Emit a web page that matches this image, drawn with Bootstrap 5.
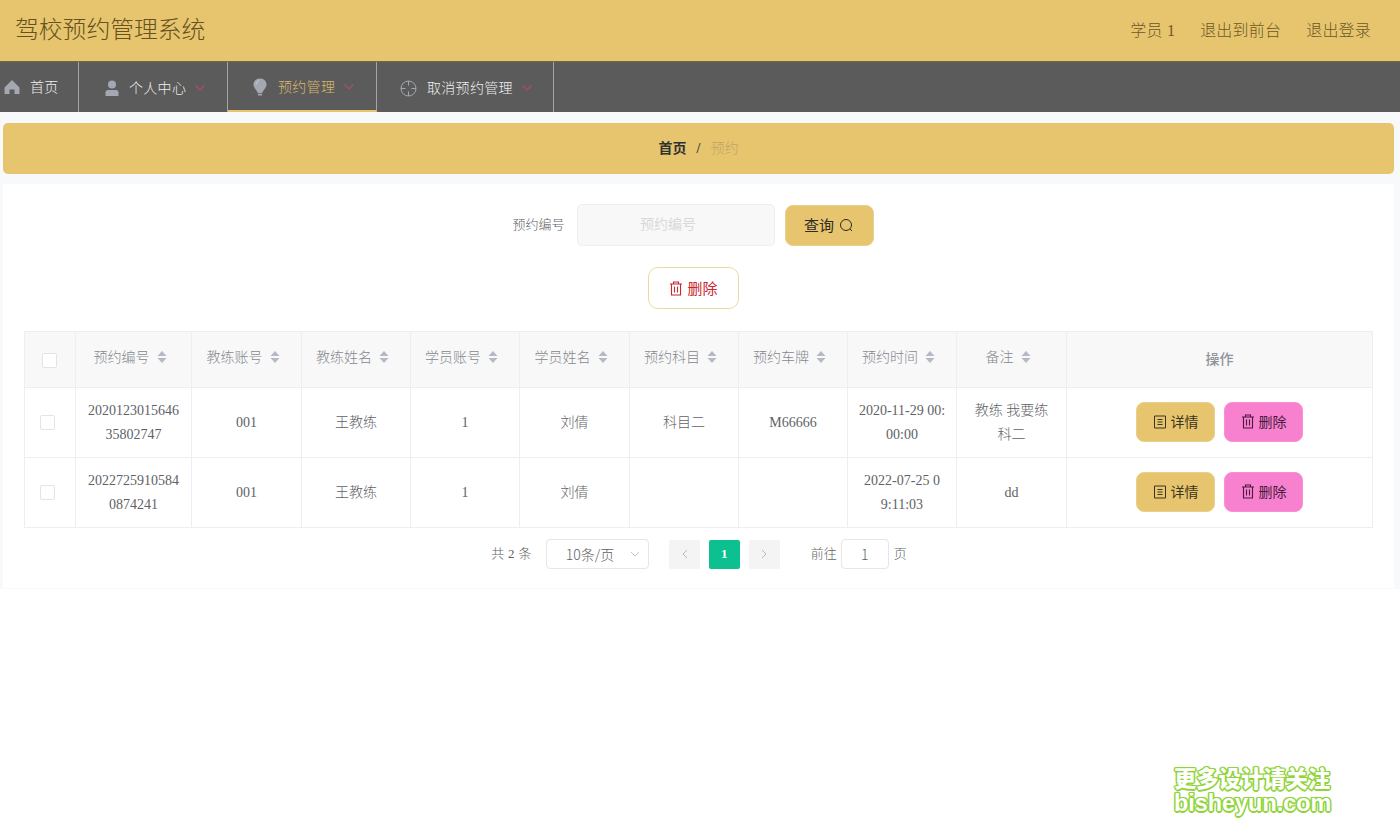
<!DOCTYPE html>
<html lang="zh">
<head>
<meta charset="utf-8">
<title>驾校预约管理系统</title>
<link href="https://cdn.jsdelivr.net/npm/bootstrap@5.3.0/dist/css/bootstrap.min.css" rel="stylesheet">
<style>
:root{--gold:#e6c56e;}
html,body{height:100%;}
body{background:#fff;font-family:"Liberation Serif","Noto Sans CJK SC",serif;font-weight:300;color:#606266;position:relative;overflow:hidden;}
.top-bar{height:61px;background:var(--gold);color:#6d5727;padding:0 29px 0 15px;}
.top-title{font-size:23.8px;line-height:1;color:#67511f;}
.top-link{font-size:16px;color:#6d5727;letter-spacing:.2px;}
.top-links{gap:25px;}
.menu-bar{height:51px;background:#5b5b5b;border-top:1px solid #77683f;}
.menu-item{height:50px;border-right:1px solid #a5a5a5;color:#eee;font-size:14px;letter-spacing:.3px;}
.menu-item svg{flex:none;}
.mi-home{width:79px;padding-left:3px;}
.mi-home .lab{margin-left:9px;}
.mi-user{width:149px;padding:2px 0 0 24px;}
.mi-bulb{width:149px;padding:2px 0 0 25px;color:#dcb96a;border-bottom:2px solid var(--gold);}
.mi-cancel{width:177px;padding:2px 0 0 23px;}
.mi-user .lab{margin-left:8px;}
.mi-bulb .lab{margin-left:11px;}
.mi-cancel .lab{margin-left:10px;}
.chev{margin-left:8px;}
.main-zone{background:#f8f9fa;height:477px;padding:11px 6px 0 3px;}
.crumb-bar{height:51px;background:var(--gold);border-radius:5px;font-size:14px;}
.crumb-bar b{color:#303133;font-weight:700;}
.crumb-bar .sep{color:#444;margin:0 10px;font-weight:700;}
.crumb-bar .now{color:#bda668;}
.panel{background:#fff;height:404px;margin-top:10px;padding:20px 21px 0;}
.search-row{gap:12px;height:42px;padding-right:11px;}
.search-lab{font-size:13px;color:#606266;width:52px;white-space:nowrap;}
.search-box{width:198px;height:42px;background:#f8f8f8;border:1px solid #eceef2;border-radius:5px;text-align:center;font-size:14px;color:#5f6266;font-family:inherit;padding:0 15px 0 0;}
.search-box::placeholder{color:#d8d8da;opacity:1;}
.btn-query{width:89px;height:41px;margin-left:-2px;background:var(--gold);border:1px solid #e8cf92;border-radius:8px;color:#2c2a22;font-size:15px;font-family:"Noto Sans CJK SC",sans-serif;font-weight:400;padding:0;gap:5px;}
.btn-query:hover,.btn-gold:hover{background:var(--gold);}
.del-row{margin-top:21px;height:42px;margin-left:-10px;}
.btn-outline-del{width:91px;height:42px;background:#fff;border:1px solid #e6dc9f;border-radius:10px;color:#c9252d;font-size:15px;font-family:"Noto Sans CJK SC",sans-serif;font-weight:400;padding:0;gap:4px;}
.data-wrap{margin-top:22px;width:1348px;}
.data-grid{table-layout:fixed;width:1348px;border-collapse:collapse;font-size:14px;color:#606266;}
.data-grid th,.data-grid td{border:1px solid #ebeef5;text-align:center;vertical-align:middle;padding:0 8px;line-height:24px;box-shadow:none;font-weight:300;}
.data-grid th{background:#f8f8f9;height:56px;color:#85888d;}
.data-grid th.srt{padding-bottom:4px;}
.data-grid td{height:70px;background:#fff;}
.data-grid td.shift{padding-bottom:2px;}
.c0{width:51px}.c1{width:116px}.c2{width:110px}.c3{width:109px}.c4{width:109px}.c5{width:110px}.c6{width:109px}.c7{width:109px}.c8{width:109px}.c9{width:110px}.c10{width:306px}
.data-grid th.op{font-weight:500;color:#909399;}
.sort-ic{display:inline-block;vertical-align:-2px;margin:0 7px 0 7px;}
.tick{display:inline-block;width:15px;height:15px;border:1px solid #e2e4e9;border-radius:2px;background:#fff;vertical-align:middle;margin-right:6px;}
.tick-lg{margin-right:2px;}
.rowbtn{width:79px;height:40px;border-radius:8px;font-size:14px;font-family:"Noto Sans CJK SC",sans-serif;font-weight:400;padding:0;color:#3c3520;border:1px solid #e9d08f;}
.btn-gold{background:var(--gold);}
.btn-pink{background:#f781cf;border-color:#f98fd6;color:#4a1a3c;margin-left:9px;}
.btn-pink:hover{background:#f781cf;color:#4a1a3c;}
.pager{margin-top:11px;height:30px;font-size:13px;color:#606266;margin-left:1px;}
.pg-total{letter-spacing:.3px;}
.pg-size{width:103px;height:30px;margin-left:14px;border:1px solid #e4e6eb;border-radius:4px;font-size:14px;font-family:"Noto Sans CJK SC",sans-serif;color:#606266;padding-left:19px;}
.pg-btn{width:31px;height:29px;background:#f4f4f5;border-radius:2px;color:#b5b7bb;}
.pg-cur{background:#0cc08f;color:#fff;font-weight:700;font-size:13px;}
.pg-jump{width:48px;height:30px;border:1px solid #e4e6eb;border-radius:4px;text-align:center;font-size:14px;font-family:"Noto Sans CJK SC",sans-serif;line-height:28px;color:#606266;margin:0 5px 0 4px;}
.gap-a{margin-left:20px}.gap-b{margin-left:9px}.gap-c{margin-left:31px}
.wm{position:absolute;left:1174px;top:764px;width:158px;font-family:"Noto Sans CJK SC","Liberation Sans",sans-serif;font-weight:900;color:#fff;font-size:22.3px;line-height:26px;white-space:nowrap;
text-shadow:1.5px 0 0 #8fd43a,-1.5px 0 0 #8fd43a,0 1.5px 0 #8fd43a,0 -1.5px 0 #8fd43a,1.1px 1.1px 0 #8fd43a,-1.1px 1.1px 0 #8fd43a,1.1px -1.1px 0 #8fd43a,-1.1px -1.1px 0 #8fd43a;}
.wm span{display:block;}
.wm .wm-en{font-family:"Liberation Sans",sans-serif;font-weight:700;font-size:23.4px;line-height:26px;}
</style>
</head>
<body>
<header class="top-bar d-flex align-items-center justify-content-between">
  <div class="top-title">驾校预约管理系统</div>
  <div class="top-links d-flex">
    <span class="top-link">学员 1</span>
    <span class="top-link">退出到前台</span>
    <span class="top-link">退出登录</span>
  </div>
</header>
<nav class="menu-bar d-flex">
  <div class="menu-item mi-home d-flex align-items-center">
    <svg width="18" height="18" viewBox="0 0 18 18"><path d="M9 2 1.500 9.500V16H6.500V11.500H11.500V16H16.500V9.500Z" fill="#a3a8b2"/></svg>
    <span class="lab">首页</span>
  </div>
  <div class="menu-item mi-user d-flex align-items-center">
    <svg width="18" height="18" viewBox="0 0 18 18"><circle cx="9" cy="5.500" r="4" fill="#a3a8b2"/><path d="M2.500 17V13.500Q2.500 11 5 11H13Q15.500 11 15.500 13.500V17Z" fill="#a3a8b2"/></svg>
    <span class="lab">个人中心</span>
    <svg class="chev" width="12" height="8" viewBox="0 0 12 8"><path d="M1.500 1.500 6 6 10.500 1.500" fill="none" stroke="#b04a6a" stroke-width="1.200"/></svg>
  </div>
  <div class="menu-item mi-bulb d-flex align-items-center">
    <svg width="14" height="18" viewBox="0 0 14 18"><path d="M7 .5C3 .5.500 3.200.500 6.500.500 9.800 4 12.500 4.800 15H9.200C10 12.500 13.500 9.800 13.500 6.500 13.500 3.200 11 .5 7 .5Z" fill="#a3a8b2"/><path d="M3 6.500C3 4.500 4.200 3 6 2.800" fill="none" stroke="#c9cdd4" stroke-width="1"/><rect x="4.800" y="15.800" width="4.400" height="1.600" rx=".7" fill="#a3a8b2"/></svg>
    <span class="lab">预约管理</span>
    <svg class="chev" width="12" height="8" viewBox="0 0 12 8"><path d="M1.500 1.500 6 6 10.500 1.500" fill="none" stroke="#b04a6a" stroke-width="1.200"/></svg>
  </div>
  <div class="menu-item mi-cancel d-flex align-items-center">
    <svg width="17" height="17" viewBox="0 0 17 17"><circle cx="8.500" cy="8.500" r="7.500" fill="none" stroke="#a3a8b2" stroke-width="1"/><path d="M8.500 1V5.500M8.500 11.500V16M1 8.500H5.500M11.500 8.500H16" stroke="#a3a8b2" stroke-width="1"/></svg>
    <span class="lab">取消预约管理</span>
    <svg class="chev" width="12" height="8" viewBox="0 0 12 8"><path d="M1.500 1.500 6 6 10.500 1.500" fill="none" stroke="#b04a6a" stroke-width="1.200"/></svg>
  </div>
</nav>
<main class="main-zone">
  <div class="crumb-bar d-flex align-items-center justify-content-center">
    <b>首页</b><span class="sep">/</span><span class="now">预约</span>
  </div>
  <section class="panel">
    <div class="search-row d-flex align-items-center justify-content-center">
      <span class="search-lab">预约编号</span>
      <input class="search-box" placeholder="预约编号">
      <button class="btn btn-query d-flex align-items-center justify-content-center">查询
        <svg width="15" height="15" viewBox="0 0 15 15"><circle cx="7" cy="7" r="5.500" fill="none" stroke="#2c2a22" stroke-width="1"/><path d="M11 11 13 13" stroke="#2c2a22" stroke-width="1"/></svg>
      </button>
    </div>
    <div class="del-row d-flex justify-content-center">
      <button class="btn btn-outline-del d-flex align-items-center justify-content-center">
        <svg width="14" height="15" viewBox="0 0 14 15"><path d="M1 3H13M4.500 3V1H9.500V3M2.500 3V14H11.500V3M5.500 5.500V11.500M8.500 5.500V11.500" fill="none" stroke="#c9252d" stroke-width="1.100"/></svg>删除
      </button>
    </div>
    <div class="data-wrap">
      <table class="data-grid">
        <colgroup><col class="c0"><col class="c1"><col class="c2"><col class="c3"><col class="c4"><col class="c5"><col class="c6"><col class="c7"><col class="c8"><col class="c9"><col class="c10"></colgroup>
        <thead>
          <tr>
            <th><span class="tick tick-lg"></span></th>
            <th class="srt">预约编号<svg class="sort-ic" width="10" height="14" viewBox="0 0 10 14"><path d="M5 1 9.500 6H.5ZM5 13 9.500 8H.5Z" fill="#b4b9c4"/></svg></th>
            <th class="srt">教练账号<svg class="sort-ic" width="10" height="14" viewBox="0 0 10 14"><path d="M5 1 9.500 6H.5ZM5 13 9.500 8H.5Z" fill="#b4b9c4"/></svg></th>
            <th class="srt">教练姓名<svg class="sort-ic" width="10" height="14" viewBox="0 0 10 14"><path d="M5 1 9.500 6H.5ZM5 13 9.500 8H.5Z" fill="#b4b9c4"/></svg></th>
            <th class="srt">学员账号<svg class="sort-ic" width="10" height="14" viewBox="0 0 10 14"><path d="M5 1 9.500 6H.5ZM5 13 9.500 8H.5Z" fill="#b4b9c4"/></svg></th>
            <th class="srt">学员姓名<svg class="sort-ic" width="10" height="14" viewBox="0 0 10 14"><path d="M5 1 9.500 6H.5ZM5 13 9.500 8H.5Z" fill="#b4b9c4"/></svg></th>
            <th class="srt">预约科目<svg class="sort-ic" width="10" height="14" viewBox="0 0 10 14"><path d="M5 1 9.500 6H.5ZM5 13 9.500 8H.5Z" fill="#b4b9c4"/></svg></th>
            <th class="srt">预约车牌<svg class="sort-ic" width="10" height="14" viewBox="0 0 10 14"><path d="M5 1 9.500 6H.5ZM5 13 9.500 8H.5Z" fill="#b4b9c4"/></svg></th>
            <th class="srt">预约时间<svg class="sort-ic" width="10" height="14" viewBox="0 0 10 14"><path d="M5 1 9.500 6H.5ZM5 13 9.500 8H.5Z" fill="#b4b9c4"/></svg></th>
            <th class="srt">备注<svg class="sort-ic" width="10" height="14" viewBox="0 0 10 14"><path d="M5 1 9.500 6H.5ZM5 13 9.500 8H.5Z" fill="#b4b9c4"/></svg></th>
            <th class="op">操作</th>
          </tr>
        </thead>
        <tbody>
          <tr>
            <td class="shift"><span class="tick"></span></td>
            <td>2020123015646<br>35802747</td><td>001</td><td>王教练</td><td>1</td><td>刘倩</td><td>科目二</td><td>M66666</td>
            <td>2020-11-29 00:<br>00:00</td><td>教练 我要练<br>科二</td>
            <td class="shift">
              <div class="d-flex justify-content-center">
                <button class="btn rowbtn btn-gold d-flex align-items-center justify-content-center gap-1"><svg width="14" height="14" viewBox="0 0 14 14"><path d="M1.500 1H12.500V13H1.500ZM4.500 4.500H9.500M4.500 7H9.500M4.500 9.500H9.500" fill="none" stroke="#3c3520" stroke-width="1"/></svg>详情</button>
                <button class="btn rowbtn btn-pink d-flex align-items-center justify-content-center gap-1"><svg width="14" height="15" viewBox="0 0 14 15"><path d="M1 3H13M4.500 3V1H9.500V3M2.500 3V14H11.500V3M5.500 5.500V11.500M8.500 5.500V11.500" fill="none" stroke="#4a1a3c" stroke-width="1.100"/></svg>删除</button>
              </div>
            </td>
          </tr>
          <tr>
            <td class="shift"><span class="tick"></span></td>
            <td>2022725910584<br>0874241</td><td>001</td><td>王教练</td><td>1</td><td>刘倩</td><td></td><td></td>
            <td>2022-07-25 0<br>9:11:03</td><td>dd</td>
            <td class="shift">
              <div class="d-flex justify-content-center">
                <button class="btn rowbtn btn-gold d-flex align-items-center justify-content-center gap-1"><svg width="14" height="14" viewBox="0 0 14 14"><path d="M1.500 1H12.500V13H1.500ZM4.500 4.500H9.500M4.500 7H9.500M4.500 9.500H9.500" fill="none" stroke="#3c3520" stroke-width="1"/></svg>详情</button>
                <button class="btn rowbtn btn-pink d-flex align-items-center justify-content-center gap-1"><svg width="14" height="15" viewBox="0 0 14 15"><path d="M1 3H13M4.500 3V1H9.500V3M2.500 3V14H11.500V3M5.500 5.500V11.500M8.500 5.500V11.500" fill="none" stroke="#4a1a3c" stroke-width="1.100"/></svg>删除</button>
              </div>
            </td>
          </tr>
        </tbody>
      </table>
    </div>
    <div class="pager d-flex align-items-center justify-content-center">
      <span class="pg-total">共 2 条</span>
      <div class="pg-size d-flex align-items-center justify-content-between">10条/页<svg class="me-2" width="10" height="6" viewBox="0 0 10 6"><path d="M1 1 5 5 9 1" fill="none" stroke="#c0c4cc"/></svg></div>
      <div class="pg-btn gap-a d-flex align-items-center justify-content-center"><svg width="7" height="10" viewBox="0 0 7 10"><path d="M6 1 2 5 6 9" fill="none" stroke="#b5b7bb"/></svg></div>
      <div class="pg-btn pg-cur gap-b d-flex align-items-center justify-content-center">1</div>
      <div class="pg-btn gap-b d-flex align-items-center justify-content-center"><svg width="7" height="10" viewBox="0 0 7 10"><path d="M1 1 5 5 1 9" fill="none" stroke="#b5b7bb"/></svg></div>
      <span class="gap-c">前往</span><div class="pg-jump">1</div><span>页</span>
    </div>
  </section>
</main>
<div class="wm"><span>更多设计请关注</span><span class="wm-en">bisheyun.com</span></div>
<script src="https://cdn.jsdelivr.net/npm/bootstrap@5.3.0/dist/js/bootstrap.bundle.min.js"></script>
</body>
</html>
